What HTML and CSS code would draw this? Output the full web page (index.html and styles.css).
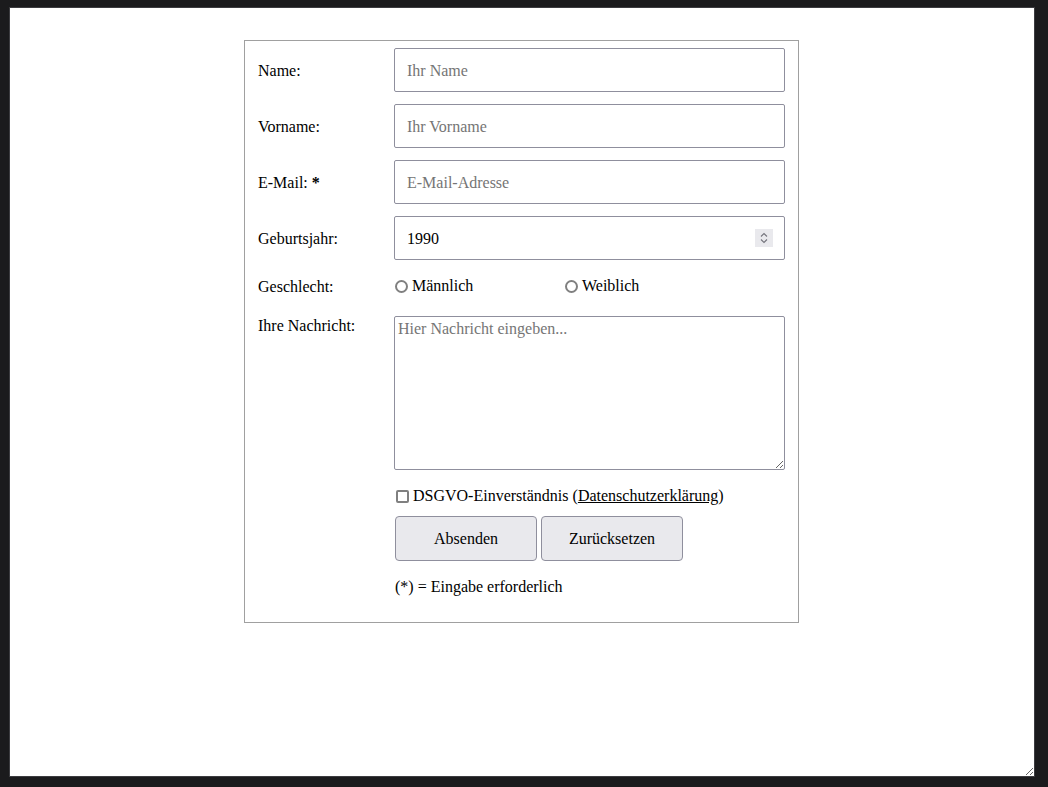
FILE: index.html
```html
<!DOCTYPE html>
<html lang="de">
<head>
<meta charset="utf-8">
<title>Kontakt</title>
<link rel="stylesheet" href="styles.css">
</head>
<body>
<div class="frame">
  <form class="form">
    <div class="row">
      <label class="lbl" for="name">Name:</label>
      <input class="field" id="name" type="text" placeholder="Ihr Name">
    </div>
    <div class="row">
      <label class="lbl" for="vorname">Vorname:</label>
      <input class="field" id="vorname" type="text" placeholder="Ihr Vorname">
    </div>
    <div class="row">
      <label class="lbl" for="email">E-Mail: <b>*</b></label>
      <input class="field" id="email" type="email" placeholder="E-Mail-Adresse">
    </div>
    <div class="row">
      <label class="lbl" for="jahr">Geburtsjahr:</label>
      <div class="num-wrap">
        <input class="field num" id="jahr" type="number" value="1990">
        <span class="spin" aria-hidden="true">
          <svg width="18" height="18" viewBox="0 0 18 18">
            <path d="M6 7.5 L9 4.5 L12 7.5" fill="none" stroke="#74747c" stroke-width="1.1"/>
            <path d="M6 10.5 L9 13.5 L12 10.5" fill="none" stroke="#74747c" stroke-width="1.1"/>
          </svg>
        </span>
      </div>
    </div>
    <div class="row row-radio">
      <span class="lbl">Geschlecht:</span>
      <div class="radios">
        <label class="opt"><input type="radio" name="g">Männlich</label>
        <label class="opt"><input type="radio" name="g">Weiblich</label>
      </div>
    </div>
    <div class="row row-top">
      <label class="lbl lbl-top" for="msg">Ihre Nachricht:</label>
      <textarea class="area" id="msg" placeholder="Hier Nachricht eingeben..."></textarea>
    </div>
    <div class="row row-check">
      <span></span>
      <label class="check"><input type="checkbox">DSGVO-Einverständnis (<a href="#" class="link">Datenschutzerklärung</a>)</label>
    </div>
    <div class="row row-btn">
      <span></span>
      <div class="buttons">
        <button type="button" class="btn">Absenden</button>
        <button type="reset" class="btn">Zurücksetzen</button>
      </div>
    </div>
    <div class="row row-note">
      <span></span>
      <p class="note">(*) = Eingabe erforderlich</p>
    </div>
  </form>
</div>
</body>
</html>
```
FILE: styles.css
```css
html, body {
  margin: 0;
  padding: 0;
  background: #1b1b1d;
}
body {
  padding: 7px 0 0 9px;
  font-family: "Liberation Serif", "Times New Roman", serif;
  font-size: 16px;
  color: #000;
}
.frame {
  width: 1024px;
  height: 768px;
  background: #fff;
  border: 1px solid #3c3c40;
  overflow: auto;
  resize: both;
  box-sizing: content-box;
}
.form {
  width: 527px;
  margin: 32px 0 0 234px;
  padding: 7px 13px 26px 13px;
  border: 1px solid #a0a0a0;
}
.row {
  display: grid;
  grid-template-columns: 136px 391px;
  align-items: center;
  margin-bottom: 12px;
}
.lbl {
  line-height: 18px;
  padding-top: 1px;
}
.field {
  box-sizing: border-box;
  width: 391px;
  height: 44px;
  margin: 0;
  padding: 1px 12px 0;
  border: 1px solid #8f8f9d;
  border-radius: 2px;
  font-family: inherit;
  font-size: 16px;
  color: #000;
  background: #fff;
}
.field::placeholder, .area::placeholder {
  color: #757575;
}
.num-wrap {
  position: relative;
  width: 391px;
  height: 44px;
}
.num {
  -moz-appearance: textfield;
}
.num::-webkit-inner-spin-button,
.num::-webkit-outer-spin-button {
  -webkit-appearance: none;
  margin: 0;
}
.spin {
  position: absolute;
  top: 13px;
  right: 12px;
  width: 18px;
  height: 18px;
  background: #e9e9ed;
  display: block;
}
.spin svg {
  display: block;
}
.row-radio {
  height: 28px;
  margin-bottom: 16px;
}
.radios {
  display: flex;
}
.opt {
  width: 170px;
  display: flex;
  align-items: center;
}
.opt input {
  -webkit-appearance: none;
  appearance: none;
  box-sizing: border-box;
  margin: 0 4px 0 1px;
  width: 13px;
  height: 13px;
  border: 2px solid #808080;
  border-radius: 50%;
  background: #fff;
}
.row-top {
  align-items: start;
}
.lbl-top {
  padding-top: 1px;
}
.area {
  box-sizing: border-box;
  width: 391px;
  height: 154px;
  margin: 0;
  padding: 3px;
  border: 1px solid #8f8f9d;
  border-radius: 2px;
  font-family: inherit;
  font-size: 16px;
}
.row-check {
  height: 28px;
  margin-bottom: 6px;
}
.check {
  display: flex;
  align-items: center;
  white-space: pre;
}
.check input {
  -webkit-appearance: none;
  appearance: none;
  box-sizing: border-box;
  margin: 0 4px 0 2px;
  width: 13px;
  height: 13px;
  border: 2px solid #808080;
  border-radius: 2px;
  background: #fff;
}
.link {
  color: #000;
}
.buttons {
  display: flex;
  gap: 4px;
  padding-left: 1px;
}
.btn {
  width: 142px;
  height: 45px;
  margin: 0;
  background: #e9e9ed;
  border: 1px solid #8f8f9d;
  border-radius: 4px;
  font-family: inherit;
  font-size: 16px;
  color: #000;
}
.row-btn {
  margin-bottom: 16px;
}
.row-note {
  margin-bottom: 0;
}
.note {
  margin: 0;
  line-height: 18px;
  padding: 1px 0 0 1px;
}
```
